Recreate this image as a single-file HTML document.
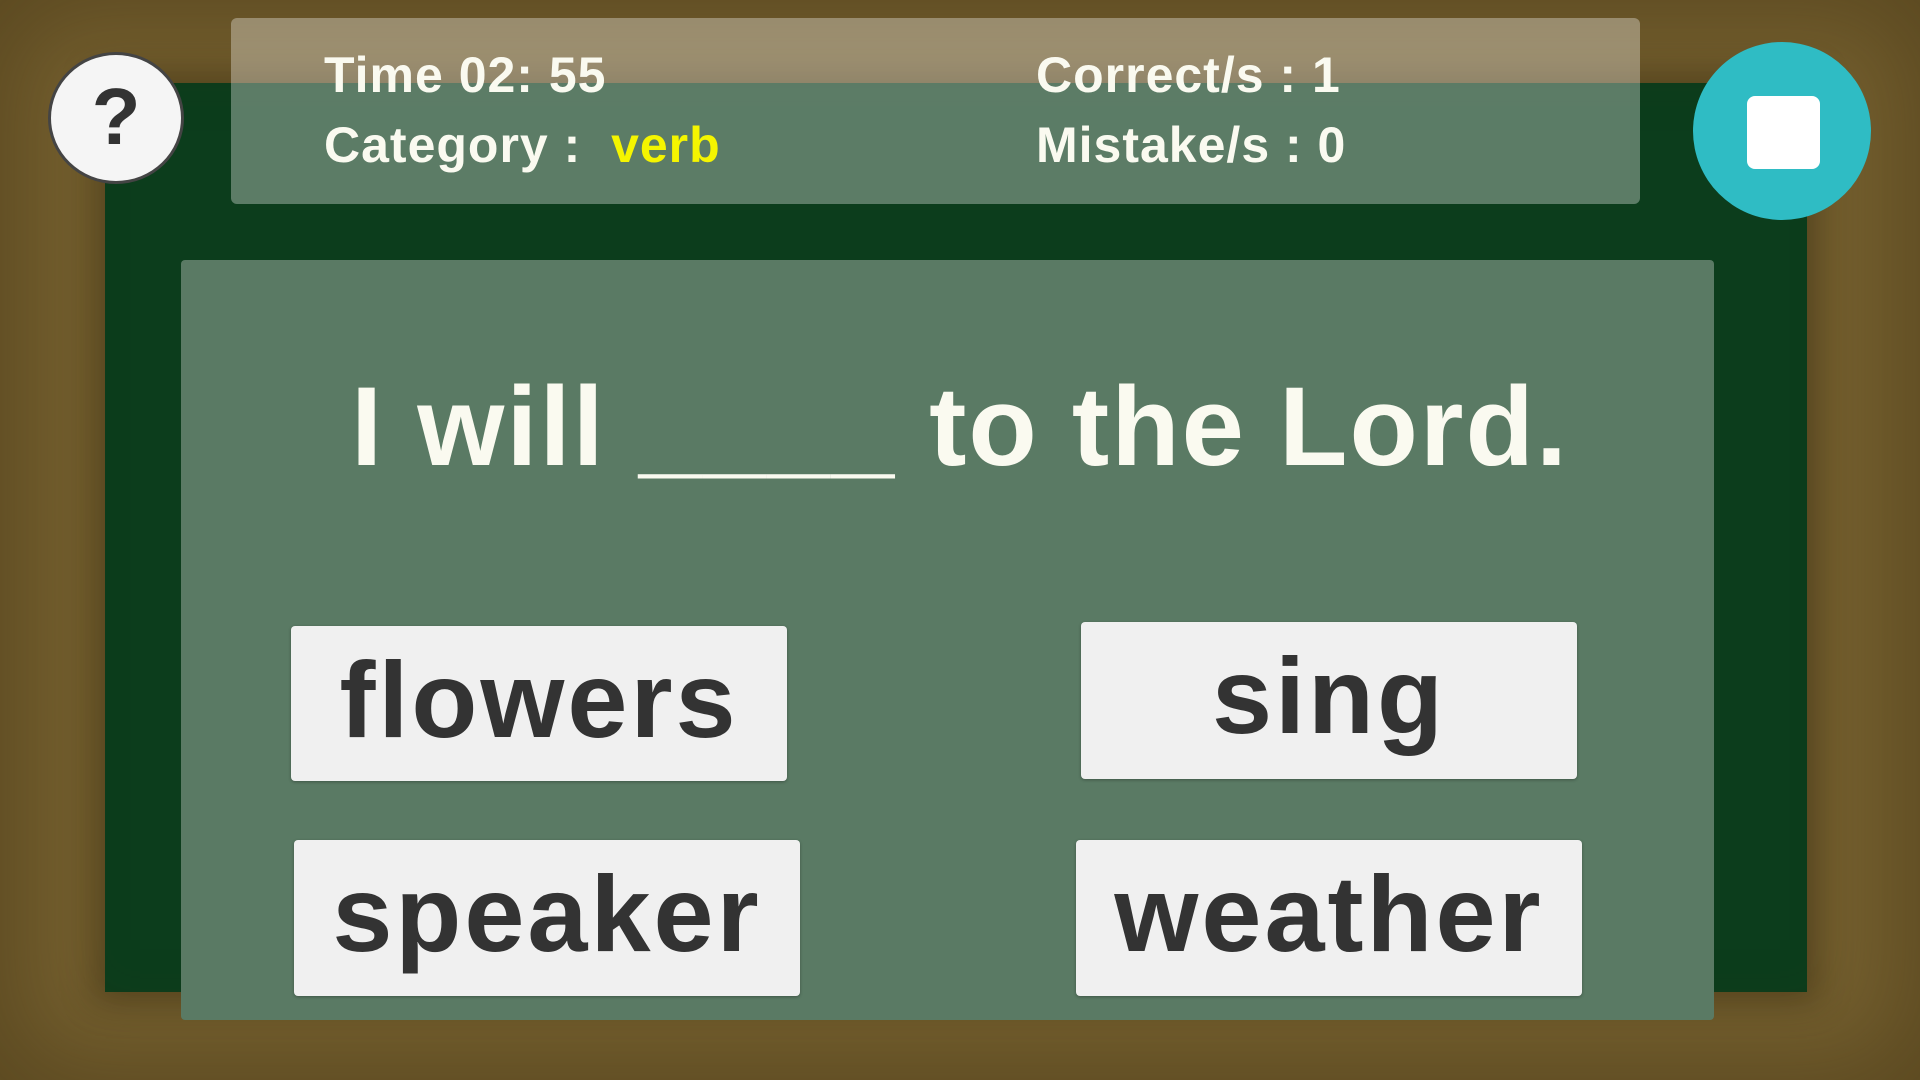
<!DOCTYPE html>
<html><head><meta charset="utf-8"><style>
html,body{margin:0;padding:0;}
body{width:1920px;height:1080px;position:relative;overflow:hidden;background:#75602f;font-family:"Liberation Sans",sans-serif;}
.vig{position:absolute;inset:0;box-shadow:inset 0 0 100px 20px rgba(60,45,15,0.45);}
.board{position:absolute;left:105px;top:83px;width:1702px;height:909px;background:#0c3d1c;box-shadow:0 0 30px 10px rgba(40,30,10,0.4);}
.hdr{position:absolute;left:231px;top:18px;width:1409px;height:186px;background:rgba(255,255,255,0.33);border-radius:6px;}
.t{position:absolute;color:#fafaf0;font-weight:bold;font-size:50px;white-space:nowrap;letter-spacing:1px;}
.help{position:absolute;left:48px;top:52px;width:136px;height:132px;border-radius:50%;background:#f5f5f5;border:3px solid #444;box-sizing:border-box;text-align:center;line-height:124px;font-size:80px;font-weight:bold;color:#333;}
.stop{position:absolute;left:1693px;top:42px;width:178px;height:178px;border-radius:50%;background:#2fbcc4;}
.stop div{position:absolute;left:54px;top:54px;width:73px;height:73px;background:#fff;border-radius:8px;}
.main{position:absolute;left:181px;top:260px;width:1533px;height:760px;background:#5a7a64;border-radius:4px;}
.q{position:absolute;left:0;width:1920px;top:362px;text-align:center;color:#fafaf0;font-weight:bold;font-size:112px;letter-spacing:2px;}
.b{position:absolute;background:#f0f0f0;border-radius:4px;color:#333;font-weight:bold;font-size:108px;text-align:center;line-height:148px;box-shadow:0 1px 3px rgba(0,0,0,0.3);letter-spacing:3px;}
</style></head><body>
<div class="board"></div>
<div class="vig"></div>
<div class="hdr"></div>
<div class="t" style="left:324px;top:46px">Time 02: 55</div>
<div class="t" style="left:324px;top:116px">Category :&nbsp; <span style="color:#f5f500">verb</span></div>
<div class="t" style="left:1036px;top:46px">Correct/s : 1</div>
<div class="t" style="left:1036px;top:116px">Mistake/s : 0</div>
<div class="help">?</div>
<div class="stop"><div></div></div>
<div class="main"></div>
<div class="q">I will ____ to the Lord.</div>
<div class="b" style="left:291px;top:626px;width:496px;height:155px;">flowers</div>
<div class="b" style="left:1081px;top:622px;width:496px;height:157px;">sing</div>
<div class="b" style="left:294px;top:840px;width:506px;height:156px;">speaker</div>
<div class="b" style="left:1076px;top:840px;width:506px;height:156px;">weather</div>
</body></html>
